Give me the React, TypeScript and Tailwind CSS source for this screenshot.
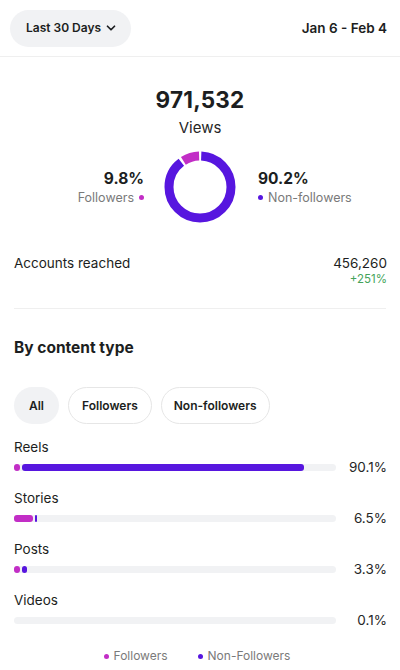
import { ChevronDown } from "lucide-react";

const PURPLE = "#5716df";
const MAGENTA = "#c22ec6";

function Donut() {
  const r = 31;
  const c = 2 * Math.PI * r;
  const gap = 2.5;
  const purpleLen = c * 0.902 - gap;
  const magentaLen = c * 0.098 - gap;
  return (
    <svg width="72" height="72" viewBox="0 0 72 72">
      <g transform="rotate(-90 36 36)">
        <circle
          cx="36"
          cy="36"
          r={r}
          fill="none"
          stroke={PURPLE}
          strokeWidth="9"
          strokeDasharray={`${purpleLen} ${c - purpleLen}`}
          strokeDashoffset={-gap / 2}
        />
        <circle
          cx="36"
          cy="36"
          r={r}
          fill="none"
          stroke={MAGENTA}
          strokeWidth="9"
          strokeDasharray={`${magentaLen} ${c - magentaLen}`}
          strokeDashoffset={-(c * 0.902 + gap / 2)}
        />
      </g>
    </svg>
  );
}

interface Row {
  label: string;
  pct: string;
  followers: string;
  nonFollowers: string;
}

const ROWS: Row[] = [
  { label: "Reels", pct: "90.1%", followers: "w-[6px]", nonFollowers: "w-[282px]" },
  { label: "Stories", pct: "6.5%", followers: "w-[19px]", nonFollowers: "w-[2px]" },
  { label: "Posts", pct: "3.3%", followers: "w-[6px]", nonFollowers: "w-[5px]" },
  { label: "Videos", pct: "0.1%", followers: "", nonFollowers: "" },
];

export default function App() {
  return (
    <div
      className="w-[400px] h-[670px] bg-white text-[#1c1e21] overflow-hidden"
      style={{ fontFamily: "Inter, 'Liberation Sans', sans-serif" }}
    >
      <div className="h-[57px] flex items-center justify-between pl-[10px] pr-[13px] border-b border-[#efefef]">
        <button className="h-[37px] pl-4 pr-[13px] rounded-full bg-[#f1f2f4] flex items-center gap-[3px] text-[12px] font-semibold">
          Last 30 Days
          <ChevronDown className="w-[14px] h-[14px]" strokeWidth={3} />
        </button>
        <span className="text-[13.5px] font-semibold">Jan 6 - Feb 4</span>
      </div>

      <div className="flex flex-col items-center pt-[29px]">
        <div className="text-[22.5px] font-bold leading-[28px] tracking-[0.2px]">971,532</div>
        <div className="text-[15px] leading-[20px] mt-[4px] text-[#262626]">Views</div>
      </div>

      <div className="flex items-center justify-center mt-[13px] gap-0">
        <div className="w-[130px] flex flex-col items-end pr-[20px]">
          <span className="text-[15.5px] font-bold leading-[20px]">9.8%</span>
          <span className="text-[12.5px] text-[#7a7a7a] leading-[16px] mt-[1px] flex items-center gap-[5px]">
            Followers
            <span className="w-[5px] h-[5px] rounded-full" style={{ background: MAGENTA }} />
          </span>
        </div>
        <Donut />
        <div className="w-[130px] flex flex-col items-start pl-[22px]">
          <span className="text-[15.5px] font-bold leading-[20px]">90.2%</span>
          <span className="text-[12.5px] text-[#7a7a7a] leading-[16px] mt-[1px] flex items-center gap-[5px]">
            <span className="w-[5px] h-[5px] rounded-full" style={{ background: PURPLE }} />
            Non-followers
          </span>
        </div>
      </div>

      <div className="flex justify-between pl-[14px] pr-[13px] mt-[31px]">
        <span className="text-[13.5px] leading-[18px]">Accounts reached</span>
        <div className="flex flex-col items-end">
          <span className="text-[13.5px] leading-[18px]">456,260</span>
          <span className="text-[11.5px] leading-[14px] text-[#45a35a]">+251%</span>
        </div>
      </div>

      <div className="mx-[14px] mt-[22px] border-t border-[#efefef]" />

      <div className="px-[14px] mt-[29px] text-[15.5px] font-bold leading-[20px]">By content type</div>

      <div className="flex gap-[9px] px-[14px] mt-[29px]">
        <div className="h-[37px] px-[15px] rounded-full bg-[#f1f2f4] flex items-center text-[12px] font-semibold">
          All
        </div>
        <div className="h-[37px] px-[13px] rounded-full border border-[#e6e6e6] flex items-center text-[12px] font-semibold">
          Followers
        </div>
        <div className="h-[37px] px-[12px] rounded-full border border-[#e6e6e6] flex items-center text-[12px] font-semibold">
          Non-followers
        </div>
      </div>

      <div className="pl-[14px] pr-[13px] mt-[14px] flex flex-col gap-[13px]">
        {ROWS.map((row) => (
          <div key={row.label}>
            <div className="text-[13.5px] leading-[18px]">{row.label}</div>
            <div className="flex items-center mt-[2px] h-[18px]">
              <div className="w-[322px] h-[7px] rounded-full bg-[#f1f2f4] flex gap-[2px]">
                {row.followers && (
                  <div className={`${row.followers} h-full rounded-[3px]`} style={{ background: MAGENTA }} />
                )}
                {row.nonFollowers && (
                  <div className={`${row.nonFollowers} h-full rounded-[3px]`} style={{ background: PURPLE }} />
                )}
              </div>
              <span className="flex-1 text-right text-[13.5px] leading-[18px] text-[#262626]">{row.pct}</span>
            </div>
          </div>
        ))}
      </div>

      <div className="flex justify-center gap-[30px] mt-[20px] text-[12px] text-[#7a7a7a] leading-[14px] pr-[6px]">
        <span className="flex items-center gap-[5px]">
          <span className="w-[5px] h-[5px] rounded-full" style={{ background: MAGENTA }} />
          Followers
        </span>
        <span className="flex items-center gap-[5px]">
          <span className="w-[5px] h-[5px] rounded-full" style={{ background: PURPLE }} />
          Non-Followers
        </span>
      </div>
    </div>
  );
}
